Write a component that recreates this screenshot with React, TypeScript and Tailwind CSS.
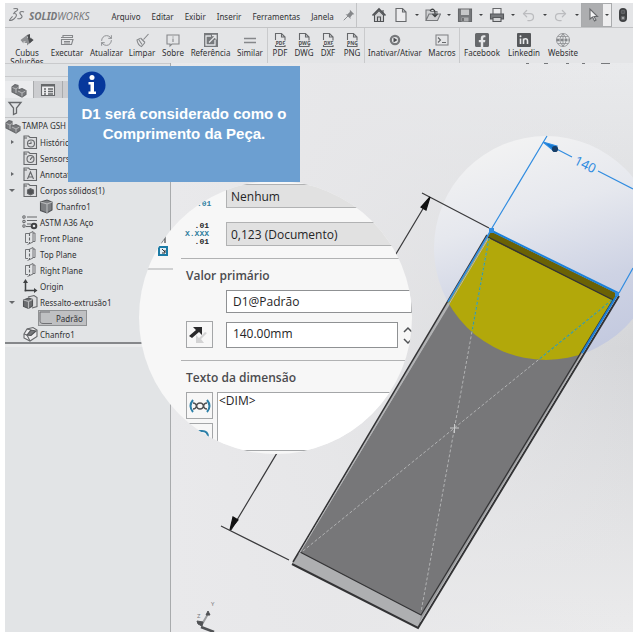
import type { ReactNode } from 'react';
import { Redo2, RefreshCw, Undo2 } from 'lucide-react';
import { FaFacebookSquare } from 'react-icons/fa';

const menus = ['Arquivo', 'Editar', 'Exibir', 'Inserir', 'Ferramentas', 'Janela'];

function Svg({ children, className = 'h-4 w-4' }: { children: ReactNode; className?: string }) {
  return (
    <svg viewBox="0 0 16 16" className={className} fill="none" stroke="#66686b" strokeWidth="1.1" aria-hidden="true">
      {children}
    </svg>
  );
}

function FileIcon({ label }: { label: string }) {
  return (
    <Svg>
      <path d="M3.500 8V1.500h6L13 5v3.500M9.500 1.500V5H13M3.500 13v1.500H13V13" />
      <text x="8.500" y="12.500" textAnchor="middle" fontSize="5" fontWeight="700" fill="#4b4d50" stroke="none">
        {label}
      </text>
    </Svg>
  );
}

const commands = [
  [
    {
      label: 'Cubus Soluções', width: 'w-10',
      icon: <Svg><path d="M1.500 8L8 3v3h4L7 9.500H4.500v2zM14.500 8L8 13.500V11H5l5-4h1.500V5z" fill="#8d8f92" stroke="none" /><path d="M8 3l3-1v4l3.500 2-4 3.500z" fill="#4b4d50" stroke="none" /></Svg>,
    },
    {
      label: 'Executar', width: 'w-10',
      icon: <Svg><path d="M4 5V3.500h9.500V5M2 5.500h12M2.500 7.500v5h10l1.500-5zM5 9.500h6M5 11h6" stroke="#85878a" /></Svg>,
    },
    { label: 'Atualizar', width: 'w-[39px]', icon: <RefreshCw className="h-[13px] w-[13px] text-[#8d8f92]" strokeWidth={1.8} /> },
    {
      label: 'Limpar', width: 'w-8',
      icon: <Svg><path d="M14.500 2L9.500 7.500M6.500 6l4.500 4.500M6 6.500L3 8c.5 3.500 2 5.500 4.500 6.500l3.500-4M5 8l3 4.500" stroke="#85878a" /></Svg>,
    },
    {
      label: 'Sobre', width: 'w-[30px]',
      icon: <Svg><path d="M2 3h12v9H7l-2 2v-2H2zM8 6.500V10M8 4.500v1" stroke="#85878a" /></Svg>,
    },
    {
      label: 'Referência', width: 'w-[45px]',
      icon: <Svg><rect x="1" y="1" width="14" height="14" fill="#77797c" stroke="none" /><path d="M8 4H3v9h9V8M6 10.500L12.500 4M9 3.500h4v4" stroke="#e4e5e7" strokeWidth="1.3" /></Svg>,
    },
    { label: 'Similar', width: 'w-[34px]', icon: <Svg><path d="M2 6.500h12M2 10.500h12" strokeWidth="1.300" stroke="#85878a" /></Svg> },
  ],
  [
    { label: 'PDF', width: 'w-6', icon: <FileIcon label="PDF" /> },
    { label: 'DWG', width: 'w-6', icon: <FileIcon label="DWG" /> },
    { label: 'DXF', width: 'w-6', icon: <FileIcon label="DXF" /> },
    { label: 'PNG', width: 'w-6', icon: <FileIcon label="PNG" /> },
  ],
  [
    {
      label: 'Inativar/Ativar', width: 'w-[60px]',
      icon: <Svg><circle cx="8" cy="8" r="4.200" strokeWidth="2.200" stroke="#77797c" /><path d="M6.500 5.500v5L10.500 8z" fill="#4b4d50" stroke="none" /></Svg>,
    },
    {
      label: 'Macros', width: 'w-[34px]',
      icon: <Svg><rect x="2" y="3" width="12" height="10" stroke="#85878a" /><path d="M4 5.500L6.500 8 4 10.500M8 10.500h4" /></Svg>,
    },
  ],
  [
    { label: 'Facebook', width: 'w-[44px]', icon: <FaFacebookSquare className="h-4 w-4 text-[#66686b]" /> },
    {
      label: 'Linkedin', width: 'w-10',
      icon: (
        <Svg>
          <rect x="1" y="1" width="14" height="14" rx="1" fill="#55575a" stroke="none" />
          <path d="M4.500 6.500V12M7.500 12V6.500M7.500 9c0-3 4-3 4 0v3" stroke="#e9eaec" strokeWidth="1.600" />
          <circle cx="4.500" cy="4.300" r="1" fill="#e9eaec" stroke="none" />
        </Svg>
      ),
    },
    {
      label: 'Website', width: 'w-[38px]',
      icon: <Svg><circle cx="8" cy="8" r="6.500" strokeWidth="0.800" stroke="#85878a" /><path d="M8 1.500v13M3 4.500h10M3 11.500h10M8 2C4 5 4 11 8 14M8 2c4 3 4 9 0 12" strokeWidth="0.700" stroke="#85878a" /><path d="M1.500 8h13" strokeWidth="2.500" strokeDasharray="3 1" stroke="#85878a" /></Svg>,
    },
  ],
];

const quickTools = [
  {
    name: 'Novo',
    icon: <Svg><path d="M3 1.500h6.500L13 5v9.500H3zM9.500 1.500V5H13" fill="#ececee" /></Svg>,
  },
  {
    name: 'Abrir',
    icon: <Svg><path d="M1 13.500V3h4l1 1.500h6V7M1 13.500L4 7h11.500L12.500 13.500z" fill="#cfd0d2" stroke="#77797c" /><path d="M5 4c2-3 5-2 5 2v3M7.500 7L10 9.500 12.500 7" stroke="#3f4143" strokeWidth="1.300" /></Svg>,
  },
  {
    name: 'Salvar',
    icon: <Svg><path d="M1.500 2h13v12.500h-13z" fill="#77797c" stroke="#66686b" /><path d="M4 2.500h8V8H4z" fill="#c6c7c9" stroke="none" /><path d="M4.500 10.500h7v4h-7z" fill="#adaeb0" stroke="none" /><path d="M6 11v3" stroke="#3f4143" /></Svg>,
  },
  {
    name: 'Imprimir',
    icon: <Svg><path d="M4 7V1.500h8V7" fill="#ececee" /><path d="M1.500 7h13v5h-13z" fill="#77797c" stroke="#55575a" /><path d="M4 10.500h8v4H4z" fill="#d2d3d5" stroke="#55575a" /></Svg>,
  },
  { name: 'Desfazer', icon: <Undo2 className="h-[15px] w-[15px] text-[#bbbcbf]" /> },
  { name: 'Refazer', icon: <Redo2 className="h-[15px] w-[15px] text-[#bbbcbf]" /> },
];

function PartIcon() {
  return (
    <Svg>
      <path d="M1 5l3-2.500 3 1V8l4-1.500 4 2v4L11 15 1 10z" fill="#77797c" stroke="#66686b" />
      <path d="M1.500 5.500L5 7v4M5 7l2-1.500M7 9l4 2v3.500M11 11l3.500-2" stroke="#c6c7c9" strokeWidth="0.800" />
    </Svg>
  );
}

function FolderIcon({ children }: { children: ReactNode }) {
  return (
    <Svg>
      <path d="M2 14.500V2h4.500L8 3.500h6.500v11z" fill="#dcdddf" />
      <path d="M2 4h3" />
      {children}
    </Svg>
  );
}

const cube = <Svg><path d="M2.500 4L9 2l5 2v8l-5 3-6.500-2.500z" fill="#7d7f82" stroke="#505255" /><path d="M2.500 4L9 6v9M9 6l5-2" stroke="#b9babc" /></Svg>;
const plane = <Svg><path d="M7 3.500H3.500v9H6M5.500 14.500L11 12V1.500L7 3.500M11 3h2v8.500h-2" strokeWidth="0.900" /><path d="M7.500 3v11" strokeWidth="1.100" strokeDasharray="3 1.500" /></Svg>;

const features = [
  { name: 'Histórico', icon: <FolderIcon><circle cx="9" cy="9.500" r="3.500" /><path d="M9 7.500v2H6.500" /></FolderIcon>, arrow: 'right' },
  { name: 'Sensors', icon: <FolderIcon><circle cx="8.500" cy="9" r="3.500" /><path d="M8.500 9l2-2M8 9.500h1" /></FolderIcon> },
  { name: 'Annotations', icon: <FolderIcon><path d="M5.500 13L8.500 6l3 7M6.500 11h4" /></FolderIcon>, arrow: 'right' },
  { name: 'Corpos sólidos(1)', icon: <FolderIcon><path d="M5.500 8l3-1.500 3 1.500v3.500l-3 1.500-3-1.500z" fill="#505255" /></FolderIcon>, arrow: 'down' },
  { name: 'Chanfro1', icon: cube, nested: true },
  { name: 'ASTM A36 Aço', icon: <Svg><path d="M5 3h10M5 6.500h10M5 10h4" /><circle cx="2" cy="3" r="1.200" /><circle cx="2" cy="7.500" r="1.200" /><circle cx="2" cy="12" r="1.200" /><circle cx="12" cy="12" r="2.300" strokeWidth="2" stroke="#3f4143" /><path d="M4 12.500h5" /></Svg> },
  { name: 'Front Plane', icon: plane },
  { name: 'Top Plane', icon: plane },
  { name: 'Right Plane', icon: plane },
  { name: 'Origin', icon: <Svg><path d="M3.500 13.500V3M2.500 12.500H13" stroke="#3f4143" strokeWidth="1.500" /><path d="M1 5l2.500-4L6 5zM12 10l3.500 2.500L12 15z" fill="#3f4143" stroke="none" /></Svg> },
  { name: 'Ressalto-extrusão1', icon: <Svg><path d="M6 3l6-1.500 3 2v9L10 14" fill="#dcdddf" /><path d="M1.500 6l5-2 4 1.500v6.500l-4 2.500-5-2z" fill="#6b6d70" stroke="#505255" /><path d="M1.500 6l5 1.500v7M6.500 7.500l4-2" stroke="#b9babc" /></Svg>, arrow: 'down' },
  { name: 'Padrão', icon: <Svg><path d="M2 2v8.500c0 2 1 3 3 3h9M2 2h10" strokeWidth="0.900" /></Svg>, nested: true, selected: true },
  { name: 'Chanfro1', icon: <Svg><path d="M2 8l3-5 6-1.500 4 2.500v6.500L8 15l-6-3z" fill="#ececee" stroke="#66686b" /><path d="M5 9l4-5 5 1-5 4.500z" fill="#77797c" stroke="#505255" /><path d="M2 8l3 1 3 6M5 3l4 1" /></Svg> },
];

function MenuBar() {
  return (
    <header className="flex h-[25px] shrink-0 items-center border-b border-[#c3c4c6] bg-[#e4e5e7] pl-1">
      <svg viewBox="0 0 18 16" className="h-4 w-[18px]" fill="none" stroke="#77797c" strokeWidth="1.2" aria-hidden="true">
        <path d="M5 1c4-1 6 0 4 2L5.500 5.500M4.500 6.500c5-1 5 3 1 6-2 1.500-4 2-5 1.500 1-1.500 2-3 3.500-4.500M17 4.500c-3-1-5.500 0-4.500 2l2 2.500c1 2-2.500 4-5 3" />
      </svg>
      <span className="ml-1 w-[62px] pt-[2px] text-[10px] leading-4 text-[#77797c] italic">
        <b>SOLID</b>WORKS
      </span>
      <nav className="ml-[22px] flex gap-[11px] pt-[3px] text-[8px]">
        {menus.map((menu) => (
          <button key={menu} type="button">{menu}</button>
        ))}
      </nav>
      <button type="button" aria-label="Fixar" className="ml-2 w-4">
        <Svg className="h-[14px] w-[14px]">
          <path d="M9 2l5 5-2 .5-2.500 3 .5 2L4 7l2 .5 3-3z" fill="#85878a" stroke="none" />
          <path d="M7 9l-5 5" stroke="#85878a" />
        </Svg>
      </button>
      <div className="ml-auto flex h-full items-center border-l border-[#c3c4c6] pl-3">
        <button type="button" aria-label="Início" className="flex w-5 justify-center">
          <Svg>
            <path d="M3.500 8v6.500h9V8L8 3.500z" fill="#d2d3d5" stroke="#505255" />
            <path d="M1.500 8.500L8 2l6.500 6.500" stroke="#505255" strokeWidth="1.600" />
            <path d="M6.500 14.500V10h3v4.500M12 3v3" stroke="#505255" />
          </Svg>
        </button>
        {quickTools.map((tool) => (
          <button key={tool.name} type="button" aria-label={tool.name} className="flex w-8 items-center justify-between pr-[2px] pl-1">
            {tool.icon}
            <span className="border-x-2 border-t-2 border-transparent border-t-[#3f4143]" />
          </button>
        ))}
        <button type="button" aria-label="Selecionar" className="flex h-full w-[31px] shrink-0 border border-[#a9abad]">
          <span className="flex h-full w-[21px] items-center justify-center bg-[#adaeb0]">
            <Svg><path d="M5 2v10l2.500-2 2 4 1.500-1-2-3.500h3.500z" fill="#f3f3f4" /></Svg>
          </span>
          <span className="flex h-full flex-1 items-center justify-center bg-[#eeeeef]">
            <span className="border-x-2 border-t-2 border-transparent border-t-[#3f4143]" />
          </span>
        </button>
        <button type="button" aria-label="Reconstruir" className="flex w-[21px] justify-center">
          <Svg>
            <rect x="4" y="1" width="8" height="14" rx="4" fill="#3f4143" stroke="none" />
            <circle cx="8" cy="5" r="1.800" fill="#55575a" />
            <circle cx="8" cy="11" r="1.800" fill="#a4a6a8" />
          </Svg>
        </button>
      </div>
    </header>
  );
}

function Toolbar() {
  return (
    <div className="flex h-[35px] shrink-0 overflow-hidden bg-[#e4e5e7] pl-[2px]">
      {commands.map((group, i) => (
        <div key={i} className="flex border-r border-[#c9cacc] last:border-r-0">
          {group.map((command) => (
            <button key={command.label} type="button" className={`flex flex-col items-center pt-1 text-[8px] leading-[9px] ${command.width}`}>
              <span className="flex h-4 items-center">{command.icon}</span>
              <span>{command.label}</span>
            </button>
          ))}
        </div>
      ))}
    </div>
  );
}

function FeatureTree() {
  return (
    <aside className="w-[166px] shrink-0 border-r border-[#a9abad] bg-[#e2e4e6]">
      <div className="h-[14px] border-y border-[#c9cacc]" />
      <div className="mt-1 flex h-[17px]">
        <button type="button" aria-label="Árvore de recursos" className="flex w-7 items-center justify-center bg-[#ebecee]">
          <PartIcon />
        </button>
        <button type="button" aria-label="Propriedades" className="flex w-[30px] items-center justify-center border-x border-[#a9abad] bg-[#cccdd0]">
          <Svg>
            <path d="M1.500 2.500h13v11h-13z" fill="#ececee" />
            <path d="M1.500 3.500h13" strokeWidth="2" />
            <path d="M4 7h2M8 7h5M4 9.500h2M8 9.500h5M4 12h2M8 12h5" strokeWidth="1.300" />
          </Svg>
        </button>
        <span className="flex-1 bg-[#cccdd0]" />
      </div>
      <div className="flex h-5 items-center border-b border-[#c3c4c6] pl-[2px]">
        <Svg><path d="M2 2.500h12L9.500 8v5L6.500 14.500V8z" strokeWidth="1.300" /></Svg>
      </div>
      <div className="flex h-4 items-center gap-[1px] text-[8px] whitespace-nowrap">
        <PartIcon />
        TAMPA GSH
      </div>
      <ul>
        {features.map((feature, i) => (
          <li key={i} className="flex h-4 items-center pl-1 text-[8px] whitespace-nowrap">
            <span className="w-[13px]">
              {feature.arrow === 'right' && <span className="ml-[2px] block h-0 w-0 border-y-2 border-l-3 border-transparent border-l-[#66686b]" />}
              {feature.arrow === 'down' && <span className="block h-0 w-0 border-x-3 border-t-3 border-transparent border-t-[#66686b]" />}
            </span>
            <span
              className={`flex h-4 items-center gap-1 ${feature.nested ? 'ml-4 pr-1' : ''} ${feature.selected ? 'bg-[#bfc0c2] outline outline-[#8f9193] -outline-offset-1' : ''}`}
            >
              <span className="w-[14px]">{feature.icon}</span>
              <span className="pt-[1px]">{feature.name}</span>
            </span>
          </li>
        ))}
      </ul>
      <div className="h-[5px] border-t-2 border-[#85878a] bg-[#eaebec]" />
    </aside>
  );
}

function ModelView() {
  return (
    <svg viewBox="171 63 462 569" preserveAspectRatio="xMinYMin slice" className="h-full w-full" role="img" aria-label="Chapa com cotas">
      <defs>
        <linearGradient id="sky" x1="0" y1="0" x2="0" y2="1">
          <stop offset="0" stopColor="#e9eaec" />
          <stop offset="0.500" stopColor="#d5d6d9" />
          <stop offset="1" stopColor="#ebebec" />
        </linearGradient>
        <linearGradient id="side" x1="0" y1="0" x2="1" y2="0">
          <stop offset="0" stopColor="#e9e9eb" />
          <stop offset="0.350" stopColor="#e7e7e9" stopOpacity="0.900" />
          <stop offset="1" stopColor="#e7e7e9" stopOpacity="0" />
        </linearGradient>
        <linearGradient id="lens" x1="0.300" y1="0" x2="0.600" y2="1">
          <stop offset="0" stopColor="#f3f3f3" />
          <stop offset="0.350" stopColor="#e6e8ee" />
          <stop offset="0.700" stopColor="#ced3e4" />
          <stop offset="1" stopColor="#c3c9df" />
        </linearGradient>
        <clipPath id="lensArea">
          <circle cx="546" cy="248" r="112" />
        </clipPath>
      </defs>
      <rect x="171" y="63" width="462" height="569" fill="url(#sky)" />
      <rect x="171" y="63" width="462" height="569" fill="url(#side)" />
      <g fill="#77797c">
        <path d="M526 63h3v1h-3zM544 63h4v1h-4zM566 63h3v1h-3zM582 63h3v1h-3zM601 63h9v1h-9z" />
      </g>
      <circle cx="546" cy="248" r="112" fill="url(#lens)" />

      {/* cota do comprimento total */}
      <g stroke="#3a3a3c" strokeWidth="1.200">
        <path d="M422 193L489 228M430 197L231 530M221 526L289 560" />
        <path d="M430 197l-9 10 5 3zM230 530l3-13 5 3z" fill="#111" stroke="#111" />
      </g>

      {/* chapa */}
      <path d="M490 231L618 294L418 628L292 563z" fill="#aeafb1" />
      <path d="M490 238L613 300L421 615L300 552z" fill="#777779" />
      <path d="M613 300L618 294L418 628L421 615z" fill="#9a9b9d" />
      <g clipPath="url(#lensArea)">
        <path d="M490 231L618 294L613 302L488 238z" fill="#6b6205" />
        <path d="M488 238L613 300L500 485L370 430z" fill="#b2a80a" />
      </g>
      <g fill="none" stroke="#333335" strokeWidth="1.300">
        <path d="M487 235L293 562" strokeWidth="1.500" />
        <path d="M488 237L613 300L421 615L300 552" />
        <path d="M619 296L418 628L292 564" strokeWidth="2" />
        <path d="M616 298L420 622" stroke="#b4b5b7" strokeWidth="1" />
      </g>
      <path d="M488 239L299 554" stroke="#b4b5b7" />
      <g fill="none" strokeDasharray="3 2" stroke="#b1b2b3">
        <path d="M489 238L421 612M612 300L303 551" />
        <path d="M489 238L421 612M612 300L303 551" stroke="#3d9d91" strokeWidth="1.200" clipPath="url(#lensArea)" />
      </g>
      <path d="M450 428h9M454.500 424v9" stroke="#c9cacb" />

      {/* cota D1 */}
      <g fill="none" stroke="#318ce0" strokeWidth="1.200">
        <path d="M492 228L547 136M543 142L572 157M598 171L633 189M619 293L633 268" />
        <path d="M448 302L490 232" strokeWidth="1.600" />
        <path d="M490 230L618 293" stroke="#1c80d8" strokeWidth="2" />
        <path d="M617 295L582 353" stroke="#1c80d8" strokeWidth="2" />
        <path d="M543 142l14 4-3 5z" fill="#1479d2" />
        <circle cx="555" cy="149" r="2.500" fill="#173e68" stroke="#173e68" />
        <path d="M489 228h5v5h-5zM615 292h4v4h-4z" fill="#318ce0" stroke="none" />
      </g>
      <text x="585" y="169" transform="rotate(26 585 165)" textAnchor="middle" fontSize="13" fill="#318ce0">140</text>

      {/* tríade */}
      <g stroke="#505255" fill="#505255">
        <path d="M201 626L208 614" stroke="#9c9ea0" strokeWidth="2" />
        <path d="M208 611l2 4-4 0zM197 621l6 1-1 4-4-2z" />
        <path d="M201 627L214 632" strokeWidth="2.500" />
      </g>
      <g fill="#77797c" fontSize="6">
        <text x="197" y="618">Z</text>
        <text x="211" y="606">Y</text>
      </g>
    </svg>
  );
}

// lupa sobre o painel de cota
function DimensionLens() {
  return (
    <section className="absolute top-[118px] left-[134px] h-[273px] w-[273px] overflow-hidden rounded-full bg-[#f7f7f7] font-['Open_Sans','Noto_Sans',sans-serif] text-[12px] text-[#252527]">
      <svg viewBox="0 0 40 100" className="absolute top-0 left-0 h-[100px] w-10" fill="none" aria-hidden="true">
        <path d="M22 62l4-6v6" stroke="#66686b" strokeWidth="1.500" />
        <rect x="20" y="66" width="8" height="8" fill="#e2eef5" stroke="#1c7ba6" strokeWidth="2" />
        <path d="M23 68l3 3M26 69v3h-3" stroke="#333" />
        <path d="M8 88h26" stroke="#a9abad" />
      </svg>
      <div className="ml-[42px] flex flex-col">
        <div className="flex h-[27px] items-end">
          <span className="w-[45px] pl-4 font-['Liberation_Mono',monospace] text-[8px] leading-[8px] font-bold text-[#327f9f]">.01</span>
          <select aria-label="Tolerância" className="h-6 flex-1 appearance-none border border-[#b1b2b3] bg-[#e1e1e1] pt-[2px] pl-1">
            <option>Nenhum</option>
          </select>
        </div>
        <div className="mt-[14px] flex items-center">
          <span className="flex w-[45px] flex-col pr-[17px] text-right font-['Liberation_Mono',monospace] text-[8px] leading-[8px] font-bold">
            <span>.01</span>
            <span className="text-[#327f9f]">X.XXX</span>
            <span>.01</span>
          </span>
          <select aria-label="Precisão" className="h-6 flex-1 appearance-none border border-[#b1b2b3] bg-[#e1e1e1] pt-[2px] pl-1">
            <option>0,123 (Documento)</option>
          </select>
        </div>
        <div className="mt-3 border-t border-[#b1b2b3] pt-2 pl-[5px]">
          <label htmlFor="nome" className="block h-[23px] leading-[18px] font-semibold text-[#4b4b4e]">Valor primário</label>
        </div>
        <input id="nome" defaultValue="D1@Padrão" className="ml-[45px] h-[23px] border border-[#8f9193] bg-white pl-[6px]" />
        <div className="mt-2 flex h-[27px] items-center pl-[5px]">
          <button type="button" aria-label="Inverter direção" className="flex h-[27px] w-[27px] items-center justify-center border border-[#a4a6a8]">
            <svg viewBox="0 0 20 20" className="h-5 w-5" aria-hidden="true">
              <path d="M0 11l7-6-3-3h9v8l-3-3-7 6z" fill="#29292b" />
              <path d="M18 8l-6 6 3 4H7v-8l3 3 6-6z" fill="#d3d3d4" />
            </svg>
          </button>
          <input aria-label="Valor" defaultValue="140.00mm" className="ml-[13px] h-[26px] w-[173px] border border-[#8f9193] bg-white pb-[3px] pl-[6px]" />
          <svg viewBox="0 0 10 24" className="ml-1 h-6 w-[10px]" fill="none" stroke="#505255" strokeWidth="1.500" aria-hidden="true">
            <path d="M2 9l4-4 4 4M2 16l4 4 4-4" />
          </svg>
        </div>
        <div className="mt-3 border-t border-[#b1b2b3] pt-2 pl-[5px]">
          <label htmlFor="texto" className="block h-[23px] leading-[18px] font-semibold text-[#4b4b4e]">Texto da dimensão</label>
        </div>
        <div className="flex pl-[5px]">
          <div className="flex w-[31px] flex-col gap-1">
            <button type="button" aria-label="Adicionar parênteses" className="flex h-[27px] w-[27px] items-center justify-center border border-[#a4a6a8]">
              <svg viewBox="0 0 24 20" className="h-5 w-6" fill="none" aria-hidden="true">
                <path d="M5 4q-5 6 0 12M19 4q5 6 0 12" stroke="#2c7fa8" strokeWidth="2" />
                <path d="M5 7q3 0 3.500 3t3.500 3M5 13q3 0 3.500-3t3.500-3M12 7q3 0 3.500 3t3.500 3M12 13q3 0 3.500-3t3.500-3" stroke="#505255" strokeWidth="1.500" />
              </svg>
            </button>
            <button type="button" aria-label="Cota de inspeção" className="flex h-[27px] w-[27px] justify-center border border-[#a4a6a8] pt-[5px]">
              <svg viewBox="0 0 20 14" className="h-[14px] w-5" fill="none" aria-hidden="true">
                <path d="M2 12V3q0-1 2-1h8q6 0 6 6v4M10 6h4" stroke="#2c7fa8" strokeWidth="2" />
              </svg>
            </button>
          </div>
          <textarea id="texto" defaultValue="<DIM>" className="h-[59px] w-[194px] resize-none border border-[#a4a6a8] bg-white pl-[1px] leading-4" />
        </div>
      </div>
    </section>
  );
}

export default function App() {
  return (
    <div className="flex h-screen flex-col bg-white pt-[3px] pr-[7px] pb-[6px] pl-[5px] font-['Noto_Sans','Open_Sans',sans-serif] text-[#303133]">
      <MenuBar />
      <Toolbar />
      <main className="relative flex min-h-0 flex-1 overflow-hidden">
        <FeatureTree />
        <div className="min-w-0 flex-1">
          <ModelView />
        </div>
        <DimensionLens />
        <div className="absolute top-[3px] left-[63px] h-[116px] w-[232px] bg-[#6c9fd1] px-[6px] pt-[5px] font-['Liberation_Sans',sans-serif] text-white">
          <svg viewBox="0 0 28 28" className="ml-1 h-7 w-7" aria-hidden="true">
            <circle cx="14" cy="14" r="13.500" fill="#06389c" />
            <circle cx="14" cy="6.500" r="2.500" fill="#fff" />
            <path d="M10.500 11h5.500v9.500h2V23h-7.500v-2.500h2v-7h-2z" fill="#fff" />
          </svg>
          <p className="mt-[5px] text-center text-[15px] leading-5 font-bold">
            D1 será considerado como o Comprimento da Peça.
          </p>
        </div>
      </main>
    </div>
  );
}
